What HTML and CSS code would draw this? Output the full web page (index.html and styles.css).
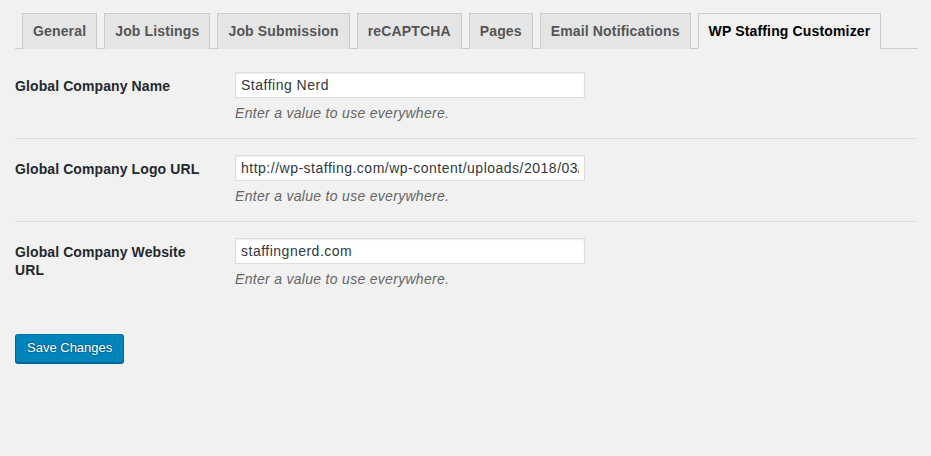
FILE: index.html
```html
<!DOCTYPE html>
<html lang="en">
<head>
<meta charset="utf-8">
<title>WP Staffing Settings</title>
<link rel="stylesheet" href="styles.css">
</head>
<body>
<div class="wrap">
  <nav class="nav-tab-wrapper">
    <a class="nav-tab">General</a>
    <a class="nav-tab">Job Listings</a>
    <a class="nav-tab">Job Submission</a>
    <a class="nav-tab">reCAPTCHA</a>
    <a class="nav-tab">Pages</a>
    <a class="nav-tab">Email Notifications</a>
    <a class="nav-tab nav-tab-active">WP Staffing Customizer</a>
  </nav>
  <form class="settings">
    <div class="form-row sep">
      <label class="row-label">Global Company Name</label>
      <div class="row-field">
        <input class="regular-text" type="text" value="Staffing Nerd">
        <p class="description">Enter a value to use everywhere.</p>
      </div>
    </div>
    <div class="form-row sep">
      <label class="row-label">Global Company Logo URL</label>
      <div class="row-field">
        <input class="regular-text" type="text" value="http://wp-staffing.com/wp-content/uploads/2018/03/logo.png">
        <p class="description">Enter a value to use everywhere.</p>
      </div>
    </div>
    <div class="form-row">
      <label class="row-label">Global Company Website URL</label>
      <div class="row-field">
        <input class="regular-text" type="text" value="staffingnerd.com">
        <p class="description">Enter a value to use everywhere.</p>
      </div>
    </div>
    <div class="submit">
      <button type="button" class="button-primary">Save Changes</button>
    </div>
  </form>
</div>
</body>
</html>
```
FILE: styles.css
```css
html, body {
  margin: 0;
  padding: 0;
  background: #f1f1f1;
}
body {
  font-family: "Liberation Sans", Arial, sans-serif;
  font-size: 14px;
  color: #23282d;
  height: 456px;
  overflow: hidden;
}
.wrap {
  padding: 13px 13px 0 15px;
}
.nav-tab-wrapper {
  display: flex;
  border-bottom: 1px solid #ccc;
  padding-left: 7px;
  gap: 7px;
}
.nav-tab {
  display: block;
  border: 1px solid #ccc;
  border-bottom: none;
  background: #e5e5e5;
  color: #555;
  font-weight: 700;
  font-size: 14px;
  line-height: 24px;
  letter-spacing: 0.15px;
  padding: 5px 10px;
  margin-bottom: -1px;
  white-space: nowrap;
}
.nav-tab-active {
  background: #f1f1f1;
  color: #000;
  border-bottom: 1px solid #f1f1f1;
}
.settings {
  margin-top: 7px;
}
.form-row {
  display: flex;
  align-items: flex-start;
  padding: 16px 0 14px;
}
.form-row.sep {
  border-bottom: 1px solid #ddd;
}
.row-label {
  width: 200px;
  padding: 5px 10px 0 0;
  flex: none;
  font-weight: 700;
  font-size: 14px;
  line-height: 18px;
  letter-spacing: 0.1px;
  color: #23282d;
}
.row-field {
  padding: 0 10px;
}
.regular-text {
  display: block;
  box-sizing: border-box;
  width: 350px;
  height: 26px;
  margin: 0;
  padding: 0 5px;
  border: 1px solid #ddd;
  box-shadow: inset 0 1px 2px rgba(0,0,0,.07);
  background: #fff;
  color: #32373c;
  font-family: "Liberation Sans", Arial, sans-serif;
  font-size: 14px;
  letter-spacing: 0.5px;
  outline: none;
}
.description {
  margin: 5px 0 0;
  font-style: italic;
  color: #666;
  font-size: 14px;
  line-height: 21px;
  letter-spacing: 0.3px;
}
.submit {
  padding-top: 30px;
}
.button-primary {
  display: block;
  height: 29px;
  padding: 0 11px 1px;
  margin: 0;
  background: #0085ba;
  border: 1px solid;
  border-color: #0073aa #006799 #006799;
  border-radius: 3px;
  box-shadow: 0 1px 0 #006799;
  color: #fff;
  font-family: "Liberation Sans", Arial, sans-serif;
  font-size: 13px;
  line-height: 26px;
  text-shadow: 0 -1px 1px #006799, 1px 0 1px #006799, 0 1px 1px #006799, -1px 0 1px #006799;
  cursor: pointer;
}
```
